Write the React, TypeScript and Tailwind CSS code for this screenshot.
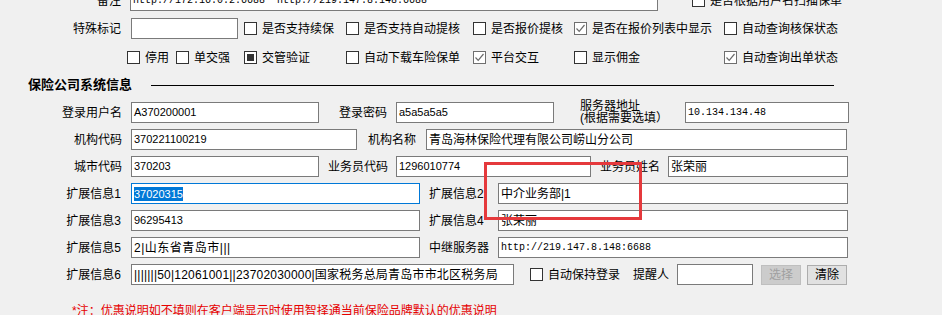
import React from 'react';

type FieldProps = { w: string; className?: string; children?: React.ReactNode };

const Field = ({ w, className = '', children }: FieldProps) => (
  <div
    className={`h-[21px] shrink-0 flex items-center bg-white border border-[#7a7a7a] px-[2px] overflow-hidden whitespace-nowrap ${w} ${className}`}
  >
    {children}
  </div>
);

type CheckProps = { label: string; state?: 'off' | 'on' | 'fill'; className?: string };

const Check = ({ label, state = 'off', className = '' }: CheckProps) => (
  <div className={`flex items-center shrink-0 ${className}`}>
    <div
      className={`w-[13px] h-[13px] shrink-0 flex items-center justify-center bg-white border ${
        state === 'on' ? 'border-[#6f6f6f]' : 'border-[#333333]'
      }`}
    >
      {state === 'on' && (
        <svg width="11" height="11" viewBox="0 0 11 11">
          <path d="M1.5 5.5 L4.2 8.3 L9.5 2" fill="none" stroke="#6a6a6a" strokeWidth="1.2" />
        </svg>
      )}
      {state === 'fill' && <div className="w-[7px] h-[7px] bg-[#333333]" />}
    </div>
    <span className="ml-[5px] whitespace-nowrap">{label}</span>
  </div>
);

const Label = ({ w, children }: { w: string; children: React.ReactNode }) => (
  <div className={`${w} shrink-0 whitespace-nowrap text-right`}>{children}</div>
);

export default function App() {
  return (
    <div className="relative w-[942px] h-[315px] overflow-hidden bg-[#f0f0f0] text-black text-[12px] font-['Liberation_Sans','Noto_Sans_CJK_SC',sans-serif]">
      {/* 备注 row, cut off at the top */}
      <div className="flex items-center h-[21px] -mt-[10px]">
        <Label w="w-[121px]">备注</Label>
        <Field w="w-[528px] ml-[9px]" className="font-['Liberation_Mono',monospace] text-[10px]">
          http://172.16.0.2:6688&nbsp;&nbsp;http://219.147.8.148:6688
        </Field>
        <Check className="ml-[34px]" label="是否根据用户名扫描保单" />
      </div>

      {/* 特殊标记 row */}
      <div className="flex items-center h-[21px] mt-[7px]">
        <Label w="w-[121px]">特殊标记</Label>
        <Field w="w-[107px] ml-[10px]" />
        <div className="w-[102px] ml-[6px]">
          <Check label="是否支持续保" />
        </div>
        <div className="w-[127px]">
          <Check label="是否支持自动提核" />
        </div>
        <div className="w-[101px]">
          <Check label="是否报价提核" />
        </div>
        <div className="w-[150px]">
          <Check label="是否在报价列表中显示" state="on" />
        </div>
        <Check label="自动查询核保状态" />
      </div>

      {/* flags row */}
      <div className="flex items-center h-[21px] mt-[8px] pl-[127px]">
        <div className="w-[49px]">
          <Check label="停用" />
        </div>
        <div className="w-[68px]">
          <Check label="单交强" />
        </div>
        <div className="w-[102px]">
          <Check label="交管验证" state="fill" />
        </div>
        <div className="w-[127px]">
          <Check label="自动下载车险保单" />
        </div>
        <div className="w-[101px]">
          <Check label="平台交互" state="on" />
        </div>
        <div className="w-[150px]">
          <Check label="显示佣金" />
        </div>
        <Check label="自动查询出单状态" state="on" />
      </div>

      {/* section header */}
      <div className="flex items-center h-[16px] mt-[9px] pl-[28px] w-[834px]">
        <span className="font-bold text-[13px] whitespace-nowrap">保险公司系统信息</span>
        <div className="flex-1 h-px bg-black ml-[19px]" />
      </div>

      {/* login row */}
      <div className="flex items-center h-[21px] mt-[9px]">
        <Label w="w-[122px]">登录用户名</Label>
        <Field w="w-[188px] ml-[9px]" className="text-[11px]">A370200001</Field>
        <Label w="w-[68px]">登录密码</Label>
        <Field w="w-[158px] ml-[9px]" className="text-[11px]">a5a5a5a5</Field>
        <div className="w-[105px] ml-[26px] shrink-0 text-[12px] leading-[12px] -mt-[1px]">
          <div>服务器地址</div>
          <div>(根据需要选填）</div>
        </div>
        <Field w="w-[164px]" className="font-['Liberation_Mono',monospace] text-[10px]">10.134.134.48</Field>
      </div>

      {/* org row */}
      <div className="flex items-center h-[21px] mt-[6px]">
        <Label w="w-[122px]">机构代码</Label>
        <Field w="w-[226px] ml-[9px]" className="text-[11px]">370221100219</Field>
        <Label w="w-[59px]">机构名称</Label>
        <Field w="w-[421px] ml-[10px]">青岛海林保险代理有限公司崂山分公司</Field>
      </div>

      {/* city row */}
      <div className="flex items-center h-[21px] mt-[6px]">
        <Label w="w-[122px]">城市代码</Label>
        <Field w="w-[188px] ml-[9px]" className="text-[11px]">370203</Field>
        <Label w="w-[69px]">业务员代码</Label>
        <Field w="w-[195px] ml-[8px]" className="text-[11px]">1296010774</Field>
        <Label w="w-[69px]">业务员姓名</Label>
        <Field w="w-[180px] ml-[8px]">张荣丽</Field>
      </div>

      {/* ext 1 / 2 */}
      <div className="flex items-center h-[21px] mt-[6px]">
        <Label w="w-[121px]">扩展信息1</Label>
        <Field w="w-[289px] ml-[10px]" className="!border-[#0078d7] text-[11px]">
          <span className="bg-[#0078d7] text-white leading-[14px]">37020315</span>
        </Field>
        <div className="w-[69px] ml-[9px] shrink-0 whitespace-nowrap">扩展信息2</div>
        <Field w="w-[350px]">中介业务部|1</Field>
      </div>

      {/* ext 3 / 4 */}
      <div className="flex items-center h-[21px] mt-[6px]">
        <Label w="w-[121px]">扩展信息3</Label>
        <Field w="w-[289px] ml-[10px]" className="text-[11px]">96295413</Field>
        <div className="w-[69px] ml-[9px] shrink-0 whitespace-nowrap">扩展信息4</div>
        <Field w="w-[350px]">张荣丽</Field>
      </div>

      {/* ext 5 / relay */}
      <div className="flex items-center h-[21px] mt-[6px]">
        <Label w="w-[121px]">扩展信息5</Label>
        <Field w="w-[289px] ml-[10px]" className="tracking-[0.5px]">2|山东省青岛市|||</Field>
        <div className="w-[69px] ml-[9px] shrink-0 whitespace-nowrap">中继服务器</div>
        <Field w="w-[350px]" className="font-['Liberation_Mono',monospace] text-[10px]">
          http://219.147.8.148:6688
        </Field>
      </div>

      {/* ext 6 / reminder */}
      <div className="flex items-center h-[21px] mt-[6px]">
        <Label w="w-[121px]">扩展信息6</Label>
        <Field w="w-[383px] ml-[10px]" className="tracking-[0.2px]">
          |||||||50|12061001||23702030000|国家税务总局青岛市市北区税务局
        </Field>
        <Check className="ml-[16px]" label="自动保持登录" />
        <span className="ml-[13px] whitespace-nowrap">提醒人</span>
        <Field w="w-[76px] ml-[8px]" />
        <button
          disabled
          className="ml-[8px] w-[40px] h-[20px] bg-[#cccccc] border border-[#bfbfbf] text-[#a0a0a0] text-[12px]"
        >
          选择
        </button>
        <button className="ml-[6px] w-[40px] h-[20px] bg-[#e1e1e1] border border-[#adadad] text-[12px]">
          清除
        </button>
      </div>

      {/* note */}
      <div className="mt-[16px] pl-[72px] h-[20px] flex items-center text-[#e60000] whitespace-nowrap">
        *注：优惠说明如不填则在客户端显示时使用智择通当前保险品牌默认的优惠说明
      </div>

      {/* red annotation box */}
      <div className="absolute left-[484px] top-[162px] w-[158px] h-[58px] border-[3px] border-[#e5393c] pointer-events-none" />
    </div>
  );
}
